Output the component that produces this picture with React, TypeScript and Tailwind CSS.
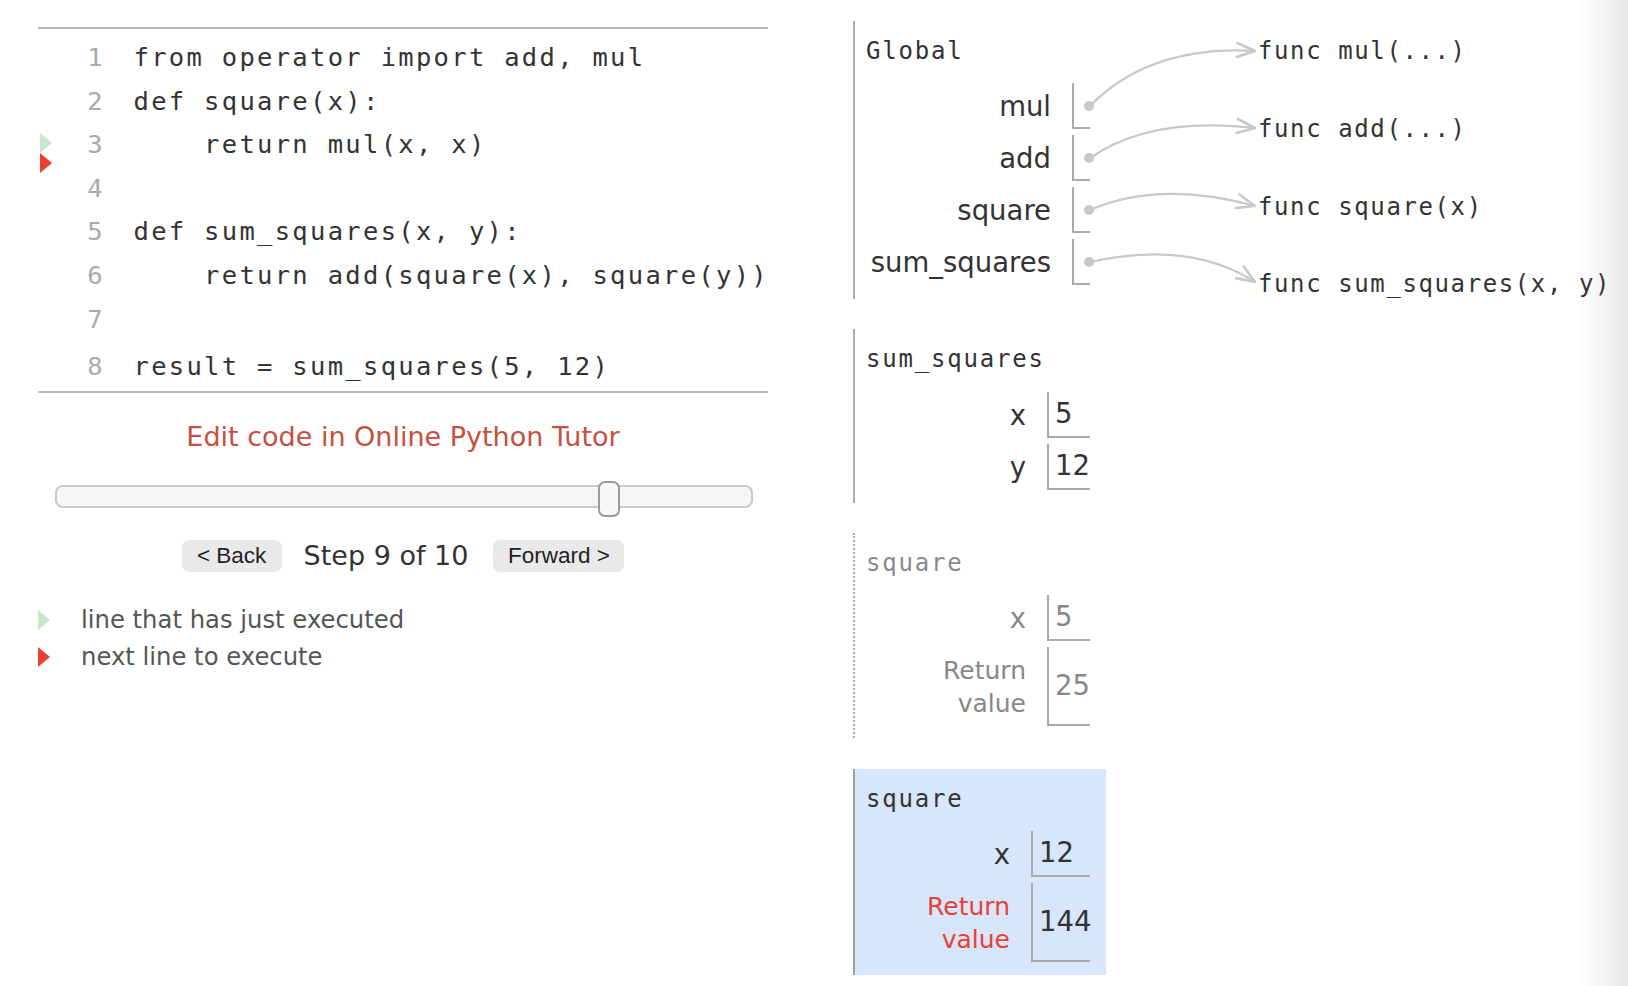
import React from "react";

const codeLines = [
  "from operator import add, mul",
  "def square(x):",
  "    return mul(x, x)",
  "",
  "def sum_squares(x, y):",
  "    return add(square(x), square(y))",
  "",
  "result = sum_squares(5, 12)",
];

function chevron(tipX: number, tipY: number, cx: number, cy: number, len = 18, half = 7) {
  const dx = tipX - cx;
  const dy = tipY - cy;
  const d = Math.sqrt(dx * dx + dy * dy) || 1;
  const ux = dx / d;
  const uy = dy / d;
  const px = -uy;
  const py = ux;
  const bx = tipX - ux * len;
  const by = tipY - uy * len;
  return `${bx + px * half},${by + py * half} ${tipX},${tipY} ${bx - px * half},${by - py * half}`;
}

const arrows = [
  { sx: 1090, sy: 106, cx: 1150, cy: 45, tx: 1255, ty: 51 },
  { sx: 1090, sy: 158, cx: 1150, cy: 116, tx: 1255, ty: 128 },
  { sx: 1090, sy: 210, cx: 1160, cy: 180, tx: 1255, ty: 206 },
  { sx: 1090, sy: 262, cx: 1190, cy: 240, tx: 1255, ty: 282 },
];

const heap = [
  { text: "func mul(...)", top: 36 },
  { text: "func add(...)", top: 114 },
  { text: "func square(x)", top: 192 },
  { text: "func sum_squares(x, y)", top: 269 },
];

function Tri({ color }: { color: string }) {
  return (
    <svg width="12" height="20" viewBox="0 0 12 20" className="block">
      <polygon points="0,0 12,10 0,20" fill={color} />
    </svg>
  );
}

function PtrRow({ name }: { name: string }) {
  return (
    <div className="flex items-center">
      <div className="pr-[21px] text-[27.5px] leading-[34px] text-[#333]">{name}</div>
      <div className="relative h-[46px] w-[18px] border-b-2 border-l-2 border-[#aaaaaa]">
        <div className="absolute left-[10px] top-[18px] h-[10px] w-[10px] rounded-full bg-[#c8c8c8]" />
      </div>
    </div>
  );
}

function ValRow({
  name,
  value,
  w,
  nameColor,
  valColor,
}: {
  name: string;
  value: string;
  w: string;
  nameColor: string;
  valColor: string;
}) {
  return (
    <div className="flex items-center">
      <div className={`pr-[21px] text-[27.5px] leading-[34px] ${nameColor}`}>{name}</div>
      <div className={`flex h-[46px] items-center border-b-2 border-l-2 border-[#aaaaaa] pl-[6px] text-[27.5px] ${w} ${valColor}`}>
        {value}
      </div>
    </div>
  );
}

function RetRow({
  value,
  w,
  nameColor,
  valColor,
}: {
  value: string;
  w: string;
  nameColor: string;
  valColor: string;
}) {
  return (
    <div className="flex items-center">
      <div className={`pr-[21px] text-right text-[25px] leading-[33px] ${nameColor}`}>
        <div>Return</div>
        <div>value</div>
      </div>
      <div className={`flex h-[79px] items-center border-b-2 border-l-2 border-[#aaaaaa] pl-[6px] text-[27.5px] ${w} ${valColor}`}>
        {value}
      </div>
    </div>
  );
}

export default function App() {
  return (
    <div className="relative h-[986px] w-[1628px] overflow-hidden bg-white font-['DejaVu_Sans',sans-serif]">
      <div className="absolute right-0 top-0 h-full w-[50px] bg-linear-to-r from-white to-[#e8e8e8]" />

      <div className="relative flex">
        {/* Left panel */}
        <div className="w-[768px] shrink-0 pl-[38px] pt-[27px]">
          <div className="relative border-y-2 border-[#b8b8b8] pb-[2px] pt-[7px]">
            <div className="absolute left-[2px] top-[104px]">
              <Tri color="#c9e6ca" />
            </div>
            <div className="absolute left-[2px] top-[124px]">
              <Tri color="#e93f34" />
            </div>
            {codeLines.map((line, i) => (
              <div
                key={i}
                className={`flex font-['DejaVu_Sans_Mono',monospace] text-[25.5px] leading-[43.6px] ${i === 7 ? "mt-[4px]" : ""}`}
              >
                <span className="w-[64.5px] shrink-0 text-right text-[#aaaaaa]">{i + 1}</span>
                <span className="ml-[31px] whitespace-pre tracking-[2.3px] text-[#333]">{line}</span>
              </div>
            ))}
          </div>

          <div className="mt-[28px] text-center text-[27px] leading-[32px] text-[#c4503f]">
            Edit code in Online Python Tutor
          </div>

          <div className="relative ml-[17px] mr-[15px] mt-[32px] h-[23px] rounded-[8px] border-2 border-[#c9c9c9] bg-[#f6f6f6]">
            <div className="absolute left-[541px] top-[-6px] h-[36px] w-[22px] rounded-[7px] border-2 border-[#9a9a9a] bg-[#f7f7f7]" />
          </div>

          <div className="mt-[32px] flex items-center justify-center">
            <div className="flex h-[32px] w-[100px] items-center justify-center rounded-[7px] bg-[#e9e9e9] font-['Liberation_Sans',sans-serif] text-[22.5px] text-[#222]">
              &lt; Back
            </div>
            <div className="ml-[22px] text-[27px] leading-[32px] text-[#333]">Step 9 of 10</div>
            <div className="ml-[25px] flex h-[32px] w-[131px] items-center justify-center rounded-[7px] bg-[#e9e9e9] font-['Liberation_Sans',sans-serif] text-[22.5px] text-[#222]">
              Forward &gt;
            </div>
          </div>

          <div className="mt-[29.5px] text-[24.3px] text-[#555]">
            <div className="flex h-[37px] items-center">
              <Tri color="#c9e6ca" />
              <span className="ml-[31px]">line that has just executed</span>
            </div>
            <div className="flex h-[37px] items-center">
              <Tri color="#e93f34" />
              <span className="ml-[31px]">next line to execute</span>
            </div>
          </div>
        </div>

        {/* Frames */}
        <div className="flex flex-col pl-[85px] pt-[21px]">
          <div className="w-[253px] border-l-2 border-[#a6b3b6] pb-[14px] pl-[11px] pr-[16px] pt-[15px]">
            <div className="h-[30px] font-['DejaVu_Sans_Mono',monospace] text-[24px] leading-[30px] tracking-[1.8px] text-[#333]">
              Global
            </div>
            <div className="mt-[17px] flex flex-col items-end gap-[6px]">
              <PtrRow name="mul" />
              <PtrRow name="add" />
              <PtrRow name="square" />
              <PtrRow name="sum_squares" />
            </div>
          </div>

          <div className="mt-[30px] w-[253px] border-l-2 border-[#a6b3b6] pb-[13px] pl-[11px] pr-[16px] pt-[15px]">
            <div className="h-[30px] font-['DejaVu_Sans_Mono',monospace] text-[24px] leading-[30px] tracking-[1.8px] text-[#333]">
              sum_squares
            </div>
            <div className="mt-[18px] flex flex-col items-end gap-[6px]">
              <ValRow name="x" value="5" w="w-[43px]" nameColor="text-[#333]" valColor="text-[#333]" />
              <ValRow name="y" value="12" w="w-[43px]" nameColor="text-[#333]" valColor="text-[#333]" />
            </div>
          </div>

          <div className="mt-[30px] w-[253px] border-l-2 border-dotted border-[#a6b3b6] pb-[12px] pl-[11px] pr-[16px] pt-[15px]">
            <div className="h-[30px] font-['DejaVu_Sans_Mono',monospace] text-[24px] leading-[30px] tracking-[1.8px] text-[#8a8a8a]">
              square
            </div>
            <div className="mt-[17px] flex flex-col items-end gap-[6px]">
              <ValRow name="x" value="5" w="w-[43px]" nameColor="text-[#888]" valColor="text-[#888]" />
              <RetRow value="25" w="w-[43px]" nameColor="text-[#888]" valColor="text-[#888]" />
            </div>
          </div>

          <div className="mt-[31px] w-[253px] border-l-2 border-[#a0a0a0] bg-[#d7e6fa] pb-[13px] pl-[11px] pr-[16px] pt-[15px]">
            <div className="h-[30px] font-['DejaVu_Sans_Mono',monospace] text-[24px] leading-[30px] tracking-[1.8px] text-[#333]">
              square
            </div>
            <div className="mt-[17px] flex flex-col items-end gap-[6px]">
              <ValRow name="x" value="12" w="w-[59px]" nameColor="text-[#333]" valColor="text-[#333]" />
              <RetRow value="144" w="w-[59px]" nameColor="text-[#e93f34]" valColor="text-[#333]" />
            </div>
          </div>
        </div>
      </div>

      {/* Heap objects and arrows (diagram canvas) */}
      <svg className="pointer-events-none absolute left-0 top-0" width="1628" height="986">
        {arrows.map((a, i) => (
          <g key={i} stroke="#c8c8c8" strokeWidth="2.2" fill="none" strokeLinecap="round" strokeLinejoin="round">
            <path d={`M${a.sx} ${a.sy} Q${a.cx} ${a.cy} ${a.tx} ${a.ty}`} />
            <polyline points={chevron(a.tx, a.ty, a.cx, a.cy)} strokeWidth="2.6" />
          </g>
        ))}
      </svg>
      {heap.map((h) => (
        <div
          key={h.text}
          className="absolute left-[1258px] h-[30px] whitespace-pre font-['DejaVu_Sans_Mono',monospace] text-[24px] leading-[30px] tracking-[1.6px] text-[#333]"
          style={{ top: h.top }}
        >
          {h.text}
        </div>
      ))}
    </div>
  );
}
